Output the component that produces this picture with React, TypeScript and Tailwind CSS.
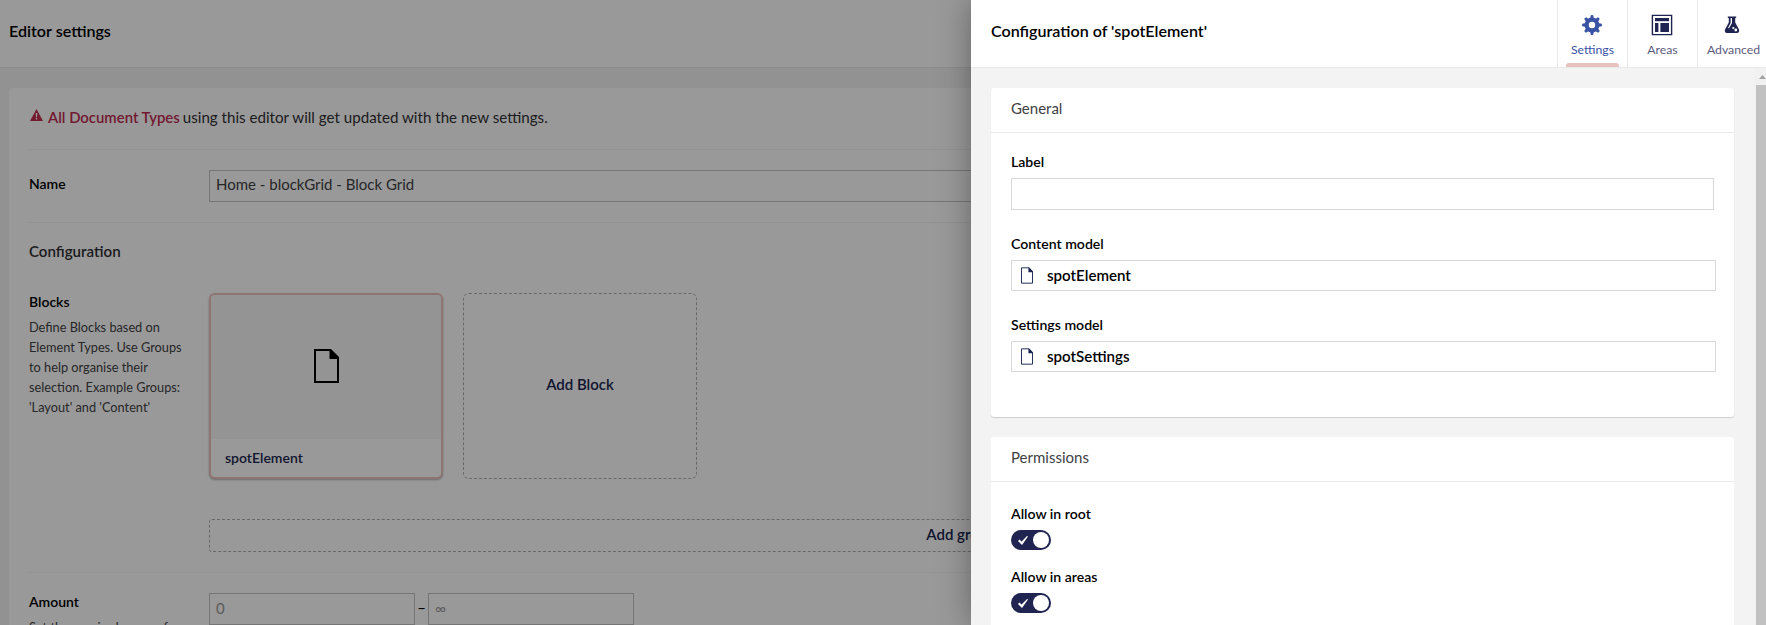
import React from "react";

function DocIcon({ className, sw = 2 }: { className: string; sw?: number }) {
  return (
    <svg viewBox="0 0 25 34" className={className} fill="none">
      <path d={`M${sw / 2} ${sw / 2}H16.5L${25 - sw / 2} 8.5V${34 - sw / 2}H${sw / 2}Z`} stroke="currentColor" strokeWidth={sw} />
      <path d="M15.5 0.5H17L25 8.5V10H15.5Z" fill="currentColor" />
    </svg>
  );
}

function GearIcon() {
  const teeth = [0, 45, 90, 135, 180, 225, 270, 315];
  return (
    <svg viewBox="0 0 20 20" className="size-5" fill="currentColor">
      {teeth.map((a) => (
        <path key={a} d="M8 4L8.8 0.3Q10 -0.2 11.2 0.3L12 4Z" transform={`rotate(${a} 10 10)`} />
      ))}
      <path fillRule="evenodd" d="M10 2.6a7.4 7.4 0 1 0 0 14.8a7.4 7.4 0 1 0 0-14.8ZM10 6.8a3.2 3.2 0 1 1 0 6.4a3.2 3.2 0 1 1 0-6.4Z" />
    </svg>
  );
}

function AreasIcon() {
  return (
    <svg viewBox="0 0 22 22" className="size-[22px]" fill="currentColor">
      <path fillRule="evenodd" d="M0.7 0.7H21.3V21.3H0.7ZM2.1 2.1V19.9H19.9V2.1Z" />
      <rect x="4" y="4" width="14" height="3.2" />
      <rect x="4" y="9" width="3.4" height="9" />
      <rect x="9.4" y="9" width="8.6" height="9" />
    </svg>
  );
}

function FlaskIcon() {
  return (
    <svg viewBox="0 0 16 18" className="h-[18px] w-4" fill="currentColor">
      <path fillRule="evenodd" d="M3.8 0.6H12.2V2H11.2V6.5L15 13.6Q15.8 17 13 17H3Q0.2 17 1 13.6L4.8 6.5V2H3.8ZM6.6 2V7L4 12L5 12.3L8 7V2Z" />
      <circle cx="9.3" cy="12" r="1.1" fill="#fff" />
      <circle cx="11.8" cy="14" r="1.4" fill="#fff" />
    </svg>
  );
}

function WarningIcon() {
  return (
    <svg viewBox="0 0 13 12" className="mr-[5px] ml-px h-3 w-[13px] -translate-y-[3px]">
      <path d="M6.5 0L13 12H0Z" fill="#c02c52" />
      <path d="M5.7 4H7.3L7 8.2H6ZM5.8 9H7.2V10.4H5.8Z" fill="#fff" />
    </svg>
  );
}

function Toggle() {
  return (
    <div className="flex h-5 w-10 items-center justify-between rounded-full bg-[#1f2450] pr-0.5 pl-[7px]">
      <svg viewBox="0 0 10 9" className="h-[9px] w-[10px]">
        <path d="M0 5L1.4 3.6L3.6 5.6L9 0L10 0.6L4 9Z" fill="#fff" />
      </svg>
      <span className="size-4 rounded-full bg-white" />
    </div>
  );
}

function Tab({ label, children, active }: { label: string; children: React.ReactNode; active?: boolean }) {
  return (
    <div className={`relative flex h-[67px] w-[70px] shrink-0 flex-col items-center border-l border-[#e9e9eb] ${active ? "text-[#3b53a4]" : "text-[#1f2450]"}`}>
      <div className="mt-[14px] mr-[2px] flex h-[22px] items-center">{children}</div>
      <span className={`mt-1 text-[12.25px] leading-5 ${active ? "" : "opacity-75"} ${label === "Advanced" ? "pl-[2px]" : ""}`}>{label}</span>
      {active && <span className="absolute bottom-0 left-2 h-1 w-[53px] rounded-t-[3px] bg-[#e6c1bd]" />}
    </div>
  );
}

function Model({ label, name }: { label: string; name: string }) {
  return (
    <div className="h-[81px]">
      <div className="h-[26px] text-[14.1px] leading-[19px] font-semibold">{label}</div>
      <div className="flex h-[31px] w-[705px] items-center border border-[#d8d7d9] pb-px text-[15.1px] font-semibold">
        <DocIcon className="ml-[9px] h-[17px] w-3 text-[#1b264f]" sw={2} />
        <span className="ml-[14px]">{name}</span>
      </div>
    </div>
  );
}

export default function App() {
  return (
    <div className="relative h-[625px] w-[1766px] overflow-hidden bg-[#f3f3f3] font-[Lato,sans-serif] text-[15px] text-black">
      <div className="h-[68px] border-b border-[#e9e9eb] bg-white pt-[21px] pl-[9px] text-[16.1px] leading-5 font-semibold">Editor settings</div>
      <div className="mt-5 ml-[9px] h-[560px] w-[1740px] rounded-[3px] bg-white pl-5">
        <div className="flex h-[61px] items-center pb-[2px] text-[15.13px] text-[#303033]">
          <WarningIcon />
          <span className="mr-[3px] text-[14.9px] font-semibold text-[#c02c52]">All Document Types</span>
          using this editor will get updated with the new settings.
        </div>
        <div className="flex h-[73px] border-t border-[#f3f3f3] pt-5">
          <div className="w-[180px] pt-1 text-[14px] leading-[19px] font-semibold">Name</div>
          <div className="h-8 w-[1500px] border border-[#c4c4c4] px-[6px] text-[15px] leading-[27px] text-[#414144]">Home - blockGrid - Block Grid</div>
        </div>
        <div className="h-[71px] border-t border-[#f3f3f3] pt-[18px] text-[15.1px] leading-5 font-semibold text-[#303033]">Configuration</div>
        <div className="flex h-[279px]">
          <div className="w-[180px]">
            <div className="text-[14px] leading-[17px] font-semibold">Blocks</div>
            <div className="mt-[7px] w-[160px] text-[12.75px] leading-5 text-[#414144]">Define Blocks based on Element Types. Use Groups to help organise their selection. Example Groups: 'Layout' and 'Content'</div>
          </div>
          <div className="flex w-[1504px] flex-col gap-10">
            <div className="flex gap-5">
              <div className="flex h-[186px] w-[234px] flex-col overflow-hidden rounded-[6px] border-2 border-[#eec3bc] bg-white shadow-[0_1px_2px_rgba(0,0,0,0.3)]">
                <div className="flex h-[144px] items-center justify-center bg-[#f7f7f7] pb-[2px]">
                  <DocIcon className="h-[34px] w-[25px]" />
                </div>
                <div className="pt-[9px] pl-[14px] text-[14px] leading-[19px] font-semibold text-[#1b264f]">spotElement</div>
              </div>
              <div className="flex h-[186px] w-[234px] items-center justify-center rounded-[6px] border border-dashed border-[#b0b0b0] pb-1 text-[15px] font-semibold text-[#1b264f]">Add Block</div>
            </div>
            <div className="flex h-[33px] items-center justify-center rounded-[3px] border border-dashed border-[#b0b0b0] pb-[2px] text-[15px] font-semibold text-[#1b264f]">Add group</div>
          </div>
        </div>
        <div className="flex h-[80px] border-t border-[#f3f3f3] pt-5">
          <div className="w-[180px]">
            <div className="text-[14px] leading-[17px] font-semibold">Amount</div>
            <div className="mt-[7px] w-[160px] text-[12.75px] leading-5 text-[#414144]">Set the required range of blocks</div>
          </div>
          <div className="h-8 w-[206px] border border-[#c4c4c4] px-[6px] text-[15px] leading-7 text-[#999]">0</div>
          <div className="w-[13px] text-center leading-7">–</div>
          <div className="h-8 w-[206px] border border-[#c4c4c4] px-[6px] text-[15px] leading-7 text-[#999]">∞</div>
        </div>
      </div>

      <div className="absolute inset-0 flex justify-end bg-black/40">
        <div className="flex w-[795px] flex-col bg-[#f3f3f3] shadow-[0_0_30px_rgba(0,0,0,0.35)]">
          <div className="flex h-[68px] shrink-0 overflow-hidden border-b border-[#e9e9eb] bg-white">
            <div className="w-[586px] shrink-0 pt-[21px] pl-5 text-[16.1px] leading-5 font-semibold">Configuration of 'spotElement'</div>
            <Tab label="Settings" active><GearIcon /></Tab>
            <Tab label="Areas"><AreasIcon /></Tab>
            <Tab label="Advanced"><FlaskIcon /></Tab>
          </div>
          <div className="flex h-[557px] justify-between overflow-hidden">
            <div className="flex flex-col gap-5 pt-5 pl-5">
              <div className="h-[329px] w-[743px] shrink-0 rounded-[3px] bg-white shadow-[0_1px_1px_rgba(0,0,0,0.16)]">
                <div className="h-[45px] border-b border-[#e9e9eb] pt-[10px] pl-5 leading-5 text-[#414144]">General</div>
                <div className="pt-5 pl-5">
                  <div className="h-[81px]">
                    <div className="h-[25px] text-[14.1px] leading-[17px] font-semibold">Label</div>
                    <div className="h-8 w-[703px] border border-[#d8d7d9]" />
                  </div>
                  <Model label="Content model" name="spotElement" />
                  <Model label="Settings model" name="spotSettings" />
                </div>
              </div>
              <div className="h-[300px] w-[743px] shrink-0 rounded-[3px] bg-white">
                <div className="h-[45px] border-b border-[#e9e9eb] pt-[10px] pl-5 leading-5 text-[#414144]">Permissions</div>
                <div className="pt-[22px] pl-5 text-[14.1px] font-semibold">
                  <div className="h-[63px]">
                    <div className="h-[26px] leading-[19px]">Allow in root</div>
                    <Toggle />
                  </div>
                  <div className="h-[63px]">
                    <div className="h-[26px] leading-[19px]">Allow in areas</div>
                    <Toggle />
                  </div>
                </div>
              </div>
            </div>
            <div className="flex w-3 flex-col items-end bg-[#f1f1f1]">
              <svg viewBox="0 0 10 17" className="h-[17px] w-[10px]">
                <path d="M3 11L6.5 7L10 11Z" fill="#a3a3a3" />
              </svg>
              <div className="w-[10px] grow bg-[#c1c1c1]" />
            </div>
          </div>
        </div>
      </div>
    </div>
  );
}
